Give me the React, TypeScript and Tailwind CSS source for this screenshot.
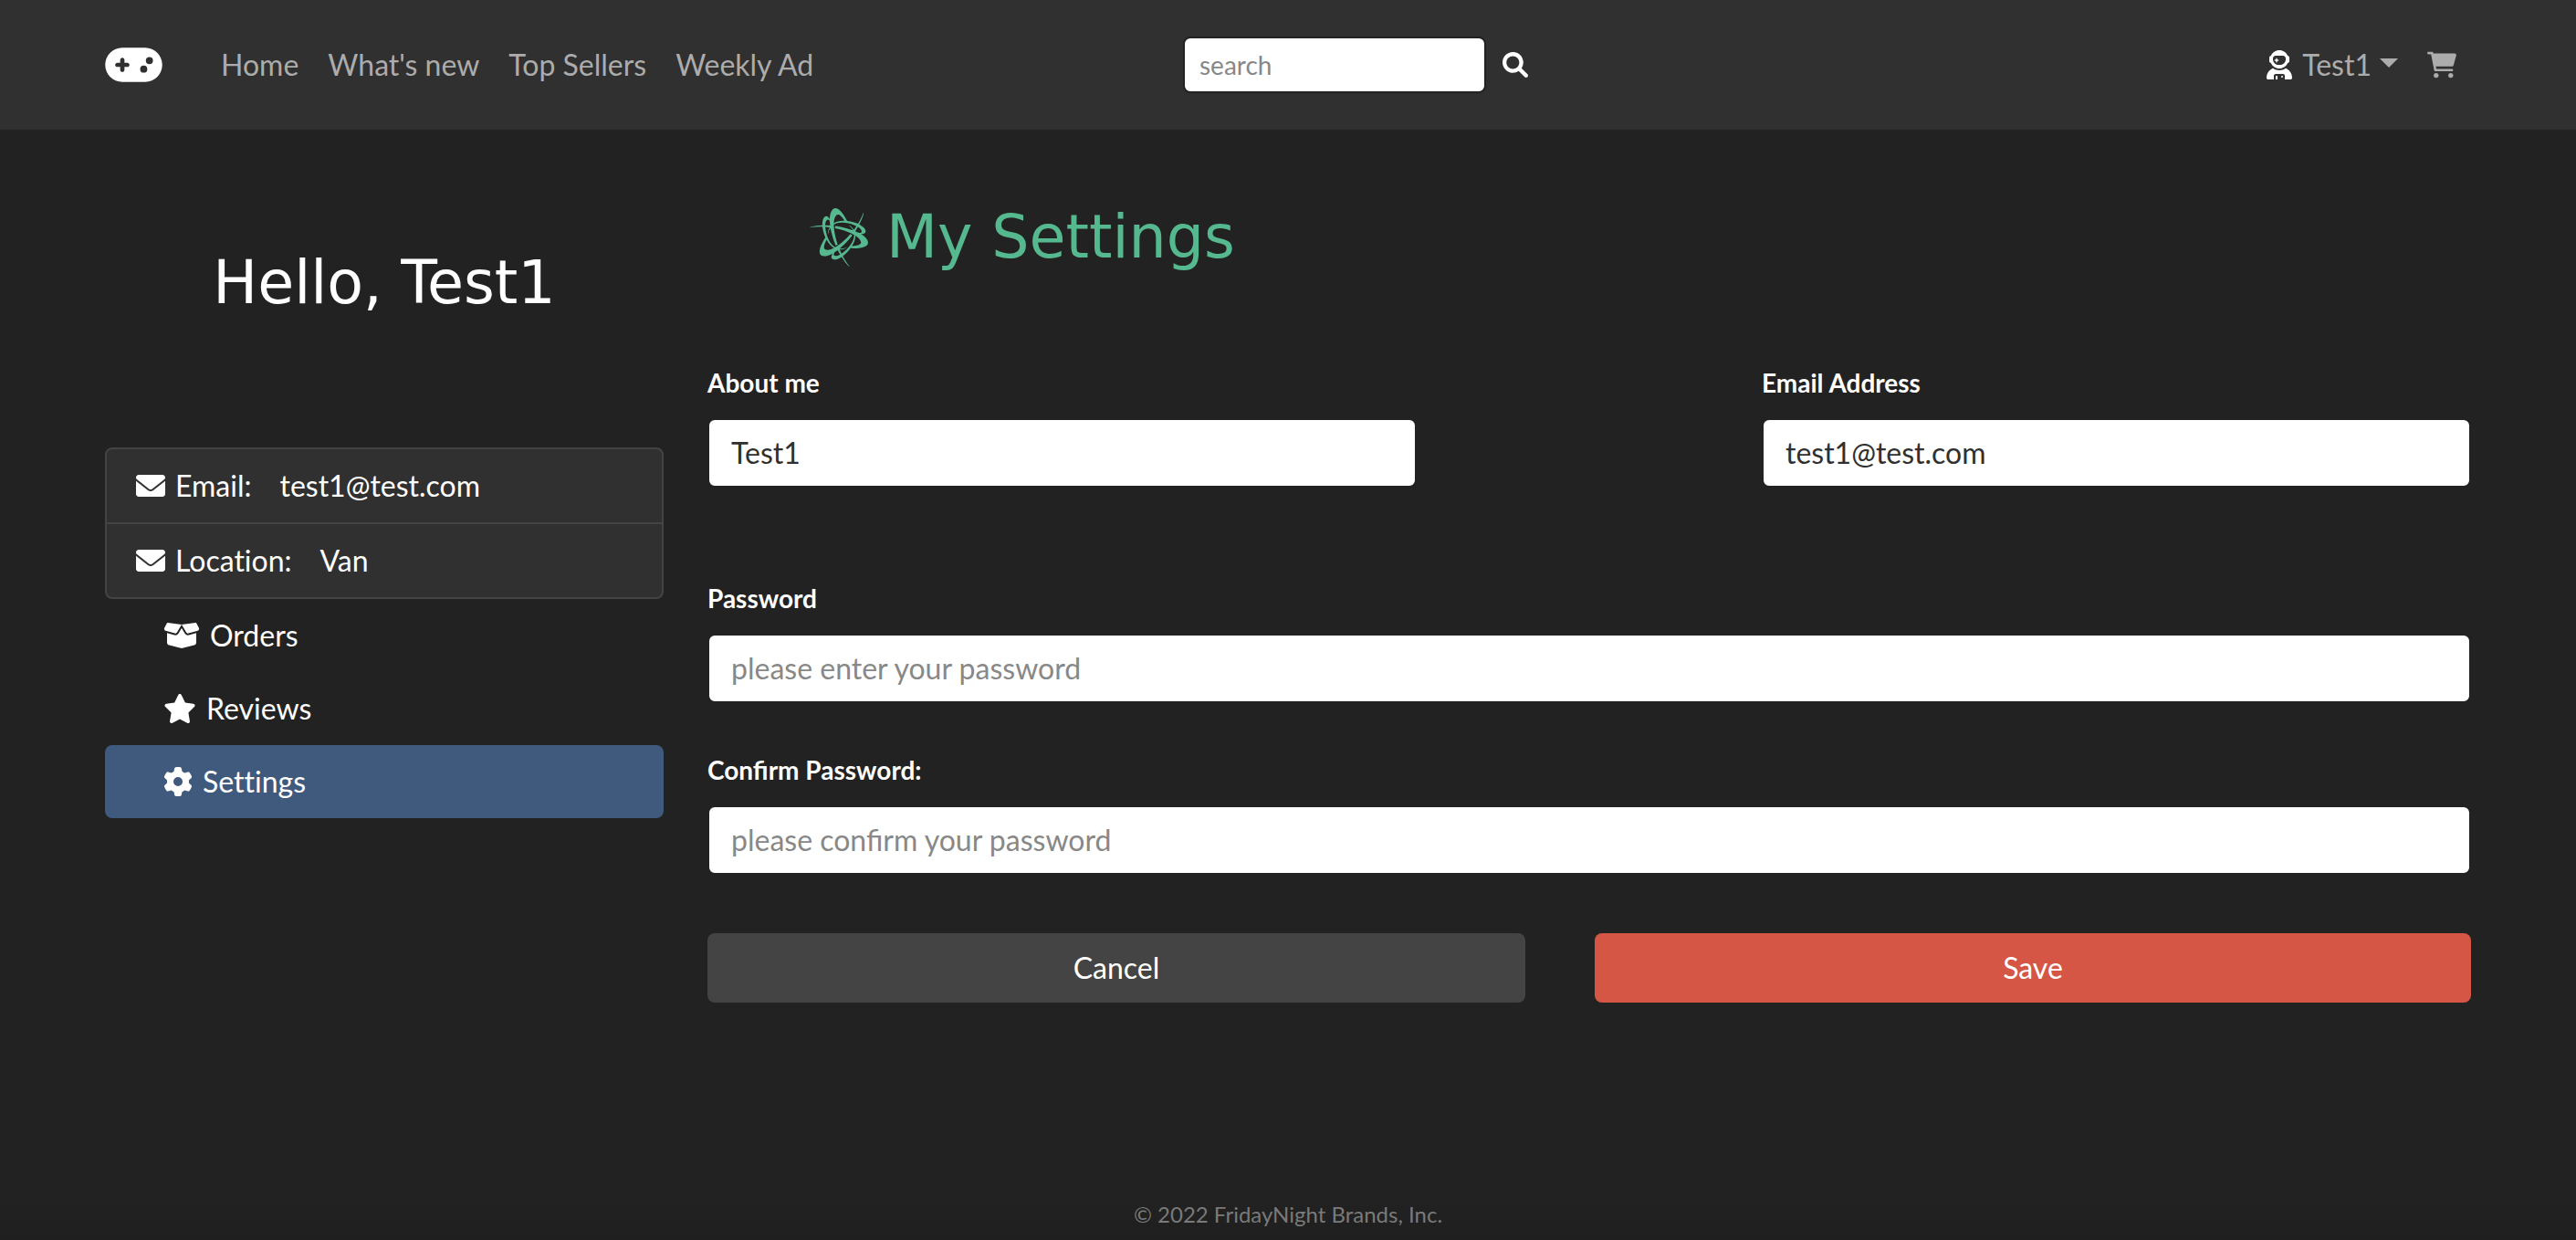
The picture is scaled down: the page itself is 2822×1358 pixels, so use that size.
import React from "react";
import { FaGamepad, FaUserAstronaut, FaStar, FaGear, FaBattleNet } from "react-icons/fa6";

const navLinks = ["Home", "What's new", "Top Sellers", "Weekly Ad"];

type IconProps = { className?: string };

function SearchIcon({ className }: IconProps) {
  return (
    <svg viewBox="0 0 512 512" fill="currentColor" className={className} aria-hidden="true">
      <path d="M500.3 443.7l-119.7-119.7c27.22-40.41 40.65-90.9 33.46-144.7C401.8 87.79 326.8 13.32 235.2 1.723C99.01-15.51-15.51 99.01 1.724 235.2c11.6 91.64 86.08 166.7 177.6 178.9c53.8 7.189 104.3-6.236 144.7-33.46l119.7 119.7c15.62 15.62 40.95 15.62 56.57 0C515.9 484.7 515.9 459.3 500.3 443.7zM79.1 208c0-70.58 57.42-128 128-128s128 57.42 128 128c0 70.58-57.42 128-128 128S79.1 278.6 79.1 208z" />
    </svg>
  );
}

function CartIcon({ className }: IconProps) {
  return (
    <svg viewBox="0 0 576 512" fill="currentColor" className={className} aria-hidden="true">
      <path d="M96 0C107.5 0 117.1 8.19 119.2 19.51L121.1 32H541.8C562.1 32 578.3 52.25 572.6 72.66L518.6 264.7C514.7 278.5 502.1 288 487.8 288H170.7L179.9 336H488C501.3 336 512 346.7 512 360C512 373.3 501.3 384 488 384H159.1C148.5 384 138.1 375.8 136.9 364.5L76.14 48H24C10.75 48 0 37.25 0 24C0 10.75 10.75 0 24 0H96z" />
      <circle cx="176" cy="464" r="48" />
      <circle cx="464" cy="464" r="48" />
    </svg>
  );
}

function EnvelopeIcon({ className }: IconProps) {
  return (
    <svg viewBox="0 0 512 512" fill="currentColor" className={className} aria-hidden="true">
      <path d="M256 352c-16.53 0-33.06-5.422-47.16-16.41L0 173.2V400C0 426.5 21.49 448 48 448h416c26.51 0 48-21.49 48-48V173.2l-208.8 162.5C289.1 346.6 272.5 352 256 352zM16.29 145.3l212.2 165.1c16.19 12.6 38.87 12.6 55.06 0l212.2-165.1C505.1 137.3 512 125 512 112C512 85.49 490.5 64 464 64h-416C21.49 64 0 85.49 0 112C0 125 6.01 137.3 16.29 145.3z" />
    </svg>
  );
}

function BoxIcon({ className }: IconProps) {
  return (
    <svg viewBox="0 0 640 512" fill="currentColor" className={className} aria-hidden="true">
      <path d="M75.23 33.4L320 63.1L564.8 33.4C571.5 32.56 578 36.06 581.1 42.12L622.8 125.5C631.7 143.4 622.2 165.1 602.9 170.6L439.6 217.3C425.7 221.2 410.8 215.4 403.4 202.1L320 63.1L236.6 202.1C229.2 215.4 214.3 221.2 200.4 217.3L37.07 170.6C17.81 165.1 8.283 143.4 17.24 125.5L58.94 42.12C61.97 36.06 68.5 32.56 75.23 33.4H75.23zM321.1 128L375.9 219.4C390.8 244.2 420.5 255.1 448.4 248L576 211.6V378.5C576 400.5 561 419.7 539.6 425.1L335.5 476.1C325.3 478.7 314.7 478.7 304.5 476.1L100.4 425.1C78.99 419.7 64 400.5 64 378.5V211.6L191.6 248C219.5 255.1 249.2 244.2 264.1 219.4L318.9 128H321.1z" />
    </svg>
  );
}

function Header() {
  return (
    <header className="bg-[#303030]">
      <div className="mx-auto grid h-[142px] max-w-[2640px] grid-cols-[1fr_auto_1fr] items-center px-6">
        <nav className="flex items-center gap-8 text-[32px] leading-[48px] text-[#acacac]">
          <a href="#" aria-label="FridayNight home" className="mr-8 text-white">
            <FaGamepad className="h-[50px] w-[63px]" />
          </a>
          {navLinks.map((label) => (
            <a key={label} href="#" className="hover:text-white">
              {label}
            </a>
          ))}
        </nav>
        <form className="flex items-center gap-[18px] pl-[148px]" onSubmit={(e) => e.preventDefault()}>
          <input
            type="search"
            aria-label="search"
            placeholder="search"
            className="w-[332px] rounded-lg border-2 border-[#222] bg-white px-4 py-2 text-[28px] leading-[42px] text-[#303030] placeholder:text-[#888]"
          />
          <button type="submit" aria-label="Submit search" className="text-white">
            <SearchIcon className="size-7" />
          </button>
        </form>
        <div className="flex items-center justify-end gap-8 pr-4 text-[#acacac]">
          <button type="button" className="flex items-center gap-[9px] text-[32px] leading-[48px]">
            <FaUserAstronaut className="size-8 text-white" />
            Test1
            <span className="mb-1 border-x-[10px] border-t-[10px] border-x-transparent border-t-current" />
          </button>
          <a href="#" aria-label="Cart">
            <CartIcon className="size-8" />
          </a>
        </div>
      </div>
    </header>
  );
}

function InfoRow({ label, value }: { label: string; value: string }) {
  return (
    <li className="flex items-center gap-[11px] px-8 py-4">
      <EnvelopeIcon className="size-8" />
      <span>{label}</span>
      <span className="ml-5">{value}</span>
    </li>
  );
}

function Sidebar() {
  const item = "flex items-center gap-[11px] rounded-lg px-16 py-4";
  return (
    <aside className="col-span-3 pt-[130px] text-[32px] leading-[48px] [font-variant-ligatures:none]">
      <h2 className="text-center font-['DejaVu_Sans',sans-serif] text-[65px] leading-[76px]">Hello, Test1</h2>
      <ul className="mt-[142px] divide-y-2 divide-[#444] rounded-lg border-2 border-[#444] bg-[#303030]">
        <InfoRow label="Email:" value="test1@test.com" />
        <InfoRow label="Location:" value="Van" />
      </ul>
      <nav className="flex flex-col">
        <a href="#" className={item}>
          <BoxIcon className="h-8 w-10" />
          Orders
        </a>
        <a href="#" className={item}>
          <FaStar className="h-8 w-9" />
          Reviews
        </a>
        <a href="#" aria-current="page" className={`${item} bg-[#3f5a7d]`}>
          <FaGear className="h-8 w-8" />
          Settings
        </a>
      </nav>
    </aside>
  );
}

type FieldProps = {
  id: string;
  label: string;
  type: string;
  value?: string;
  placeholder?: string;
};

function Field({ id, label, type, value, placeholder }: FieldProps) {
  return (
    <div className="flex flex-col gap-[18px]">
      <label htmlFor={id} className="text-[28px] font-bold leading-[42px]">
        {label}
      </label>
      <input
        id={id}
        type={type}
        defaultValue={value}
        placeholder={placeholder}
        className="w-full rounded-lg border-2 border-[#222] bg-white px-6 py-3 text-[32px] leading-[48px] text-[#303030] placeholder:text-[#888]"
      />
    </div>
  );
}

function SettingsForm() {
  const button = "rounded-lg py-[14px] text-center text-[32px] leading-[48px]";
  return (
    <main className="col-span-9 pt-20">
      <h1 className="flex items-center gap-5 pl-28 font-['DejaVu_Sans',sans-serif] text-[65px] leading-[76px] text-[#56b88f]">
        <FaBattleNet className="size-16" />
        My Settings
      </h1>
      <form className="mt-[100px]" onSubmit={(e) => e.preventDefault()}>
        <div className="grid grid-cols-12 gap-12">
          <div className="col-span-5">
            <Field id="about" label="About me" type="text" value="Test1" />
          </div>
          <div className="col-span-5 col-start-8">
            <Field id="email" label="Email Address" type="email" value="test1@test.com" />
          </div>
        </div>
        <div className="mt-[100px] flex flex-col gap-[52px]">
          <Field id="password" label="Password" type="password" placeholder="please enter your password" />
          <Field id="confirm" label="Confirm Password:" type="password" placeholder="please confirm your password" />
        </div>
        <div className="mt-16 flex gap-[76px]">
          <button type="button" className={`${button} flex-[56] bg-[#444]`}>
            Cancel
          </button>
          <button type="submit" className={`${button} flex-[60] bg-[#d55645]`}>
            Save
          </button>
        </div>
      </form>
    </main>
  );
}

export default function App() {
  return (
    <div className="flex min-h-screen flex-col bg-[#222] font-[Lato,sans-serif] text-white">
      <Header />
      <div className="mx-auto grid w-full max-w-[2640px] grow grid-cols-12 gap-12 px-6">
        <Sidebar />
        <SettingsForm />
      </div>
      <footer className="bg-linear-to-b from-[#222] to-[#1f1f1f] pt-2 pb-[10px] text-center text-[24px] leading-9 text-[#7a7a7a]">
        © 2022 FridayNight Brands, Inc.
      </footer>
    </div>
  );
}
